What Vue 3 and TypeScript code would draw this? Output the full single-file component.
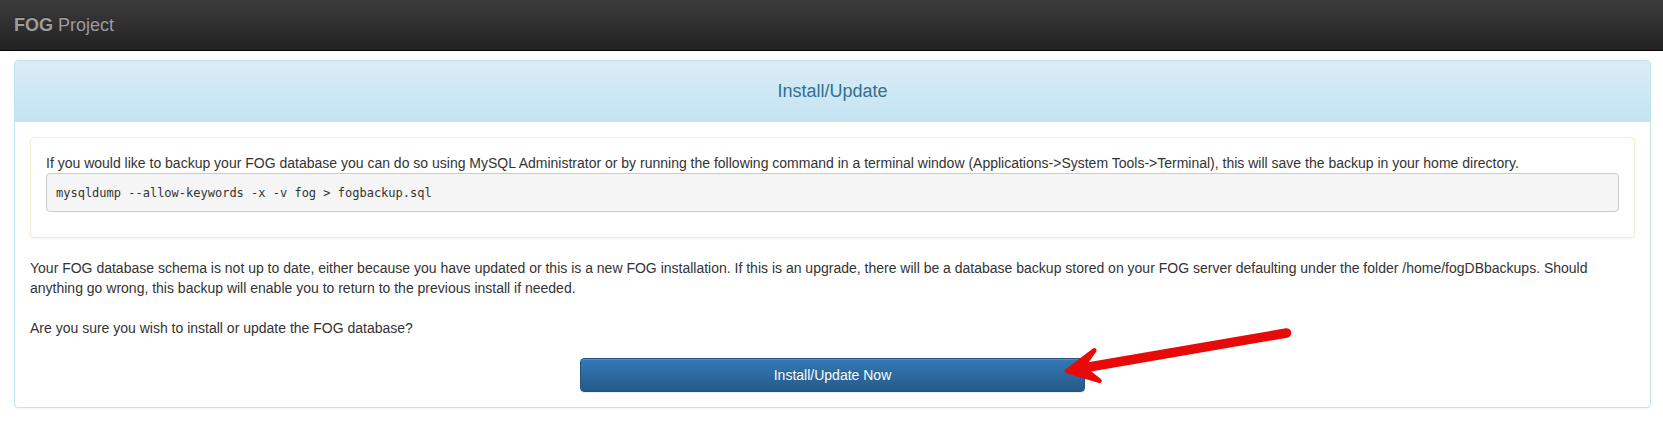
<script setup lang="ts">
const command = 'mysqldump --allow-keywords -x -v fog > fogbackup.sql'
</script>

<template>
  <div class="page">
    <nav class="navbar">
      <a class="brand" href="#"><b>FOG</b> Project</a>
    </nav>
    <main class="panel">
      <header class="panel-heading">
        <h4 class="title">Install/Update</h4>
      </header>
      <div class="panel-body">
        <section class="notice">
          <p class="text">
            If you would like to backup your FOG database you can do so using MySQL Administrator or by running the
            following command in a terminal window (Applications-&gt;System Tools-&gt;Terminal), this will save the
            backup in your home directory.
          </p>
          <pre class="command">{{ command }}</pre>
        </section>
        <p class="text spaced">
          Your FOG database schema is not up to date, either because you have updated or this is a new FOG
          installation. If this is an upgrade, there will be a database backup stored on your FOG server defaulting
          under the folder /home/fogDBbackups. Should anything go wrong, this backup will enable you to return to the
          previous install if needed.
        </p>
        <p class="text spaced">Are you sure you wish to install or update the FOG database?</p>
        <form class="actions" @submit.prevent>
          <div class="action">
            <button class="button" type="submit">Install/Update Now</button>
            <svg class="arrow" viewBox="0 0 236 64" width="236" height="64" aria-hidden="true">
              <path d="M226.5 9 L26 43.5" stroke-width="9.5" />
              <path class="head" d="M7 47 L34.3 26.4 L24 41 L27 47 L39.5 56.8 Z" stroke-width="4.6" />
            </svg>
          </div>
        </form>
      </div>
    </main>
  </div>
</template>

<style>
body {
  margin: 0;
  background: #fff;
}
</style>

<style scoped>
.page {
  color: #333;
  font-family: "Liberation Sans", Arial, sans-serif;
  font-size: 14px;
  line-height: 20px;
}

.navbar {
  display: flex;
  height: 50px;
  border-bottom: 1px solid #080808;
  background: linear-gradient(to bottom, #3c3c3c, #222);
}

.brand {
  padding: 15px 14px;
  color: #9d9d9d;
  font-size: 18px;
  line-height: 20px;
  text-decoration: none;
  text-shadow: 0 -1px 0 rgba(0, 0, 0, 0.25);
}

.panel {
  margin: 9px 12px 20px 14px;
  border: 1px solid #c2e5ec;
  border-radius: 4px;
  background: #fff;
  box-shadow: 0 1px 2px rgba(0, 0, 0, 0.05);
}

.panel-heading {
  padding: 20px 15px;
  border-bottom: 1px solid #c2e5ec;
  border-radius: 3px 3px 0 0;
  background: linear-gradient(to bottom, #d9edf7, #c4e3f3);
}

.title {
  margin: 0;
  color: #31708f;
  font-size: 18px;
  font-weight: 400;
  line-height: 20px;
  text-align: center;
}

.panel-body {
  padding: 15px;
}

.notice {
  padding: 15px;
  border: 1px solid #f5ecd0;
  border-radius: 4px;
  box-shadow: 0 1px 2px rgba(0, 0, 0, 0.05);
}

.text {
  margin: 0;
}

.spaced {
  margin: 20px 0;
}

.command {
  margin: 0 0 10px;
  padding: 10px 9px 8px;
  overflow: hidden;
  border: 1px solid #ccc;
  border-radius: 4px;
  background: #f5f5f5;
  font-family: "DejaVu Sans Mono", monospace;
  font-size: 12px;
  line-height: 19px;
}

.actions {
  display: grid;
  grid-template-columns: repeat(3, 1fr);
}

.action {
  position: relative;
  grid-column: 2;
  margin: 0 15px;
}

.button {
  display: block;
  width: 100%;
  padding: 6px 12px;
  border: 1px solid #245580;
  border-radius: 4px;
  background: linear-gradient(to bottom, #337ab7, #265a88);
  box-shadow: inset 0 1px 0 rgba(255, 255, 255, 0.15), 0 1px 1px rgba(0, 0, 0, 0.075);
  color: #fff;
  font: inherit;
  text-shadow: 0 -1px 0 rgba(0, 0, 0, 0.2);
  cursor: pointer;
}

.arrow {
  position: absolute;
  top: -34px;
  right: -211px;
  fill: none;
  stroke: #e80909;
  stroke-linecap: round;
  stroke-linejoin: round;
  pointer-events: none;
}

.head {
  fill: #e80909;
}
</style>
